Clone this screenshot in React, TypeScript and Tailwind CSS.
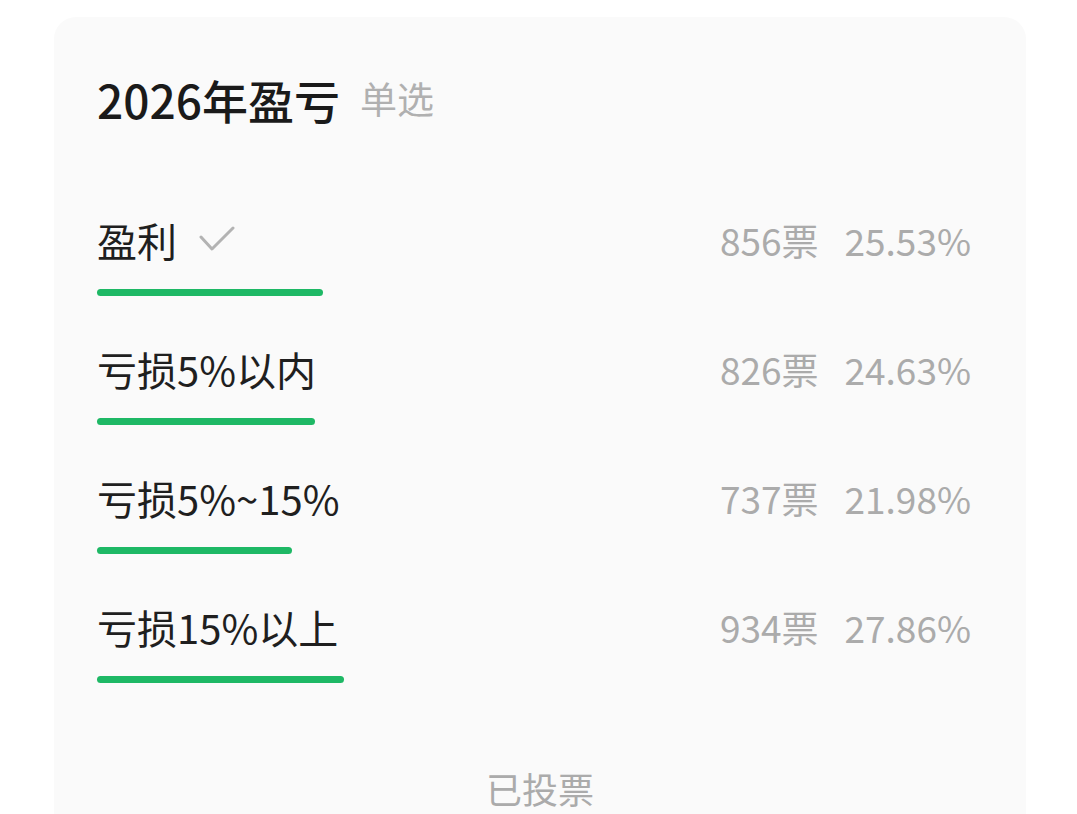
import React from "react";

const options = [
  { label: "盈利", votes: 856, pct: 25.53, chosen: true },
  { label: "亏损5%以内", votes: 826, pct: 24.63, chosen: false },
  { label: "亏损5%~15%", votes: 737, pct: 21.98, chosen: false },
  { label: "亏损15%以上", votes: 934, pct: 27.86, chosen: false },
];

const CheckMark = () => (
  <svg width="36" height="28" viewBox="0 0 36 28" fill="none" className="ml-[22px]">
    <path d="M2 11 L13 23 L34 2" stroke="#b3b3b3" strokeWidth="3" strokeLinecap="round" strokeLinejoin="round" />
  </svg>
);

const App = () => {
  return (
    <div
      className="h-[814px] bg-white pt-[17px] px-[54px] overflow-hidden"
      style={{ fontFamily: '"Noto Sans CJK SC", "Noto Sans", sans-serif' }}
    >
      <section className="w-[972px] h-[820px] rounded-[22px] bg-[#fafafa] pt-[47px] pl-[43px] pr-[55px]">
        {/* Heading */}
        <div className="flex items-center h-[69px]">
          <h2 className="text-[46px] font-medium text-[#1a1a1a] leading-none">2026年盈亏</h2>
          <span className="ml-[20px] text-[37px] text-[#b0b0b0] leading-none">单选</span>
        </div>

        {/* Options */}
        <div className="mt-[79px] flex flex-col gap-[45px]">
          {options.map((o) => (
            <div key={o.label}>
              <div className="flex items-center justify-between h-[56px]">
                <div className="flex items-center">
                  <span className="text-[40px] text-[#1f1f1f] leading-none">{o.label}</span>
                  {o.chosen && <CheckMark />}
                </div>
                <div className="flex items-center gap-[26px] text-[37px] text-[#ababab] leading-none">
                  <span>{o.votes}票</span>
                  <span>{o.pct.toFixed(2)}%</span>
                </div>
              </div>
              <div
                className="mt-[21px] h-[7px] rounded-full bg-[#1eb865]"
                style={{ width: `${o.pct * 8.86}px` }}
              />
            </div>
          ))}
        </div>

        {/* Footer */}
        <div className="mt-[78px] flex justify-center pl-[12px]">
          <span className="text-[36px] text-[#ababab] leading-[54px]">已投票</span>
        </div>
      </section>
    </div>
  );
};

export default App;
